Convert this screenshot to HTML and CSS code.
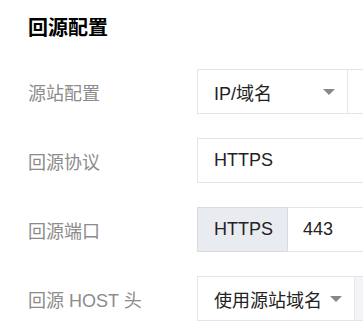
FILE: index.html
```html
<!DOCTYPE html>
<html lang="zh-CN">
<head>
    <meta charset="UTF-8">
    <meta name="viewport" content="width=device-width, initial-scale=1.0">
    <title>回源配置</title>
    <link rel="stylesheet" href="styles.css">
</head>
<body>
    <div class="panel">
        <h2 class="panel-title">回源配置</h2>

        <div class="form-row">
            <div class="form-label">源站配置</div>
            <div class="form-control">
                <div class="select select-type">
                    <span class="select-value">IP/域名</span>
                    <span class="caret"></span>
                </div>
                <div class="input input-rest"></div>
            </div>
        </div>

        <div class="form-row">
            <div class="form-label">回源协议</div>
            <div class="form-control">
                <div class="input input-full">HTTPS</div>
            </div>
        </div>

        <div class="form-row">
            <div class="form-label">回源端口</div>
            <div class="form-control">
                <div class="addon">HTTPS</div>
                <div class="input input-rest input-port">443</div>
            </div>
        </div>

        <div class="form-row">
            <div class="form-label">回源 HOST 头</div>
            <div class="form-control">
                <div class="select select-host">
                    <span class="select-value">使用源站域名</span>
                    <span class="caret"></span>
                </div>
                <div class="input input-rest input-disabled"></div>
            </div>
        </div>
    </div>
</body>
</html>
```

FILE: styles.css
```css
/* General */
body {
    margin: 0;
    background: #fff;
    font-family: "Liberation Sans", "Noto Sans CJK SC", sans-serif;
    color: #222;
    overflow: hidden;
}

.panel {
    padding: 14px 0 0 28px;
}

.panel-title {
    margin: 0 0 27px;
    font-size: 20px;
    line-height: 28px;
    font-weight: 700;
    color: #000;
}

/* Form rows */
.form-row {
    display: flex;
    align-items: center;
    height: 45px;
    margin-bottom: 24px;
}

.form-row:last-child {
    margin-bottom: 0;
}

.form-label {
    width: 169px;
    flex-shrink: 0;
    font-size: 18px;
    color: #8c8c8c;
}

/* the controls run on past the right edge of the panel */
.form-control {
    display: flex;
    height: 45px;
    width: 166px;
    flex-shrink: 0;
    overflow: hidden;
}

/* Inputs */
.input,
.select,
.addon {
    box-sizing: border-box;
    height: 45px;
    flex-shrink: 0;
    border: 1px solid #e3e5ea;
    font-size: 18px;
    display: flex;
    align-items: center;
}

.input {
    padding: 0 16px;
    background: #fff;
}

.input-full {
    width: 240px;
}

.input-rest {
    width: 160px;
    border-left: none;
}

.input-port {
    padding-left: 15px;
}

.input-disabled {
    background: #f3f4f8;
}

.addon {
    width: 91px;
    padding: 0 16px;
    background: #e8ebf0;
    border-color: #d8dbe2;
}

/* Select */
.select {
    padding: 0 12px 0 16px;
    background: #fff;
    justify-content: space-between;
}

.select-type {
    width: 151px;
}

.select-host {
    width: 158px;
}

.caret {
    width: 0;
    height: 0;
    border-left: 6px solid transparent;
    border-right: 6px solid transparent;
    border-top: 6px solid #888;
    margin-top: 1px;
}
```
